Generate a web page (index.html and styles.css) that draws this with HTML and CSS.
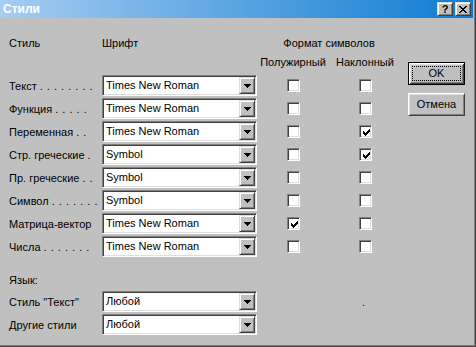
FILE: index.html
```html
<!DOCTYPE html>
<html lang="ru">
<head>
<meta charset="utf-8">
<title>Стили</title>
<link rel="stylesheet" href="styles.css">
</head>
<body>
<div class="window">
  <div class="titlebar">
    <span class="title">Стили</span>
    <div class="caption-buttons">
      <span class="cap-btn help">?</span>
      <span class="cap-btn close">
        <svg width="8" height="7" viewBox="0 0 8 7" shape-rendering="crispEdges"><path d="M0 0h2v1H0zM6 0h2v1H6zM1 1h2v1H1zM5 1h2v1H5zM2 2h4v1H2zM3 3h2v1H3zM2 4h4v1H2zM1 5h2v1H1zM5 5h2v1H5zM0 6h2v1H0zM6 6h2v1H6z" fill="#000"/></svg>
      </span>
    </div>
  </div>
  <div class="body">
    <div class="main">
      <div class="row head">
        <span class="lbl">Стиль</span>
        <span class="lbl font-h">Шрифт</span>
        <span class="group">Формат символов</span>
      </div>
      <div class="row sub">
        <span></span><span></span>
        <span class="colh">Полужирный</span>
        <span class="colh">Наклонный</span>
      </div>
      <div class="rows">
        <div class="row data">
          <span class="lbl">Текст <span class="dots">. . . . . . . .</span></span>
          <div class="combo"><span class="combo-text">Times New Roman</span><span class="combo-btn"><svg width="7" height="4" viewBox="0 0 7 4" shape-rendering="crispEdges"><path d="M0 0h7v1H0zM1 1h5v1H1zM2 2h3v1H2zM3 3h1v1H3z" fill="#000"/></svg></span></div>
          <span class="chk"></span>
          <span class="chk"></span>
        </div>
        <div class="row data">
          <span class="lbl">Функция <span class="dots">. . . . .</span></span>
          <div class="combo"><span class="combo-text">Times New Roman</span><span class="combo-btn"><svg width="7" height="4" viewBox="0 0 7 4" shape-rendering="crispEdges"><path d="M0 0h7v1H0zM1 1h5v1H1zM2 2h3v1H2zM3 3h1v1H3z" fill="#000"/></svg></span></div>
          <span class="chk"></span>
          <span class="chk"></span>
        </div>
        <div class="row data">
          <span class="lbl">Переменная <span class="dots">. .</span></span>
          <div class="combo"><span class="combo-text">Times New Roman</span><span class="combo-btn"><svg width="7" height="4" viewBox="0 0 7 4" shape-rendering="crispEdges"><path d="M0 0h7v1H0zM1 1h5v1H1zM2 2h3v1H2zM3 3h1v1H3z" fill="#000"/></svg></span></div>
          <span class="chk"></span>
          <span class="chk"><svg class="tick" width="7" height="7" viewBox="0 0 7 7" shape-rendering="crispEdges"><path d="M0 2h1v3H0zM1 3h1v3H1zM2 4h1v3H2zM3 3h1v3H3zM4 2h1v3H4zM5 1h1v3H5zM6 0h1v3H6z" fill="#000"/></svg></span>
        </div>
        <div class="row data">
          <span class="lbl">Стр. греческие <span class="dots">.</span></span>
          <div class="combo"><span class="combo-text">Symbol</span><span class="combo-btn"><svg width="7" height="4" viewBox="0 0 7 4" shape-rendering="crispEdges"><path d="M0 0h7v1H0zM1 1h5v1H1zM2 2h3v1H2zM3 3h1v1H3z" fill="#000"/></svg></span></div>
          <span class="chk"></span>
          <span class="chk"><svg class="tick" width="7" height="7" viewBox="0 0 7 7" shape-rendering="crispEdges"><path d="M0 2h1v3H0zM1 3h1v3H1zM2 4h1v3H2zM3 3h1v3H3zM4 2h1v3H4zM5 1h1v3H5zM6 0h1v3H6z" fill="#000"/></svg></span>
        </div>
        <div class="row data">
          <span class="lbl">Пр. греческие <span class="dots">. .</span></span>
          <div class="combo"><span class="combo-text">Symbol</span><span class="combo-btn"><svg width="7" height="4" viewBox="0 0 7 4" shape-rendering="crispEdges"><path d="M0 0h7v1H0zM1 1h5v1H1zM2 2h3v1H2zM3 3h1v1H3z" fill="#000"/></svg></span></div>
          <span class="chk"></span>
          <span class="chk"></span>
        </div>
        <div class="row data">
          <span class="lbl">Символ <span class="dots">. . . . . . .</span></span>
          <div class="combo"><span class="combo-text">Symbol</span><span class="combo-btn"><svg width="7" height="4" viewBox="0 0 7 4" shape-rendering="crispEdges"><path d="M0 0h7v1H0zM1 1h5v1H1zM2 2h3v1H2zM3 3h1v1H3z" fill="#000"/></svg></span></div>
          <span class="chk"></span>
          <span class="chk"></span>
        </div>
        <div class="row data">
          <span class="lbl">Матрица-вектор</span>
          <div class="combo"><span class="combo-text">Times New Roman</span><span class="combo-btn"><svg width="7" height="4" viewBox="0 0 7 4" shape-rendering="crispEdges"><path d="M0 0h7v1H0zM1 1h5v1H1zM2 2h3v1H2zM3 3h1v1H3z" fill="#000"/></svg></span></div>
          <span class="chk"><svg class="tick" width="7" height="7" viewBox="0 0 7 7" shape-rendering="crispEdges"><path d="M0 2h1v3H0zM1 3h1v3H1zM2 4h1v3H2zM3 3h1v3H3zM4 2h1v3H4zM5 1h1v3H5zM6 0h1v3H6z" fill="#000"/></svg></span>
          <span class="chk"></span>
        </div>
        <div class="row data">
          <span class="lbl">Числа <span class="dots">. . . . . . .</span></span>
          <div class="combo"><span class="combo-text">Times New Roman</span><span class="combo-btn"><svg width="7" height="4" viewBox="0 0 7 4" shape-rendering="crispEdges"><path d="M0 0h7v1H0zM1 1h5v1H1zM2 2h3v1H2zM3 3h1v1H3z" fill="#000"/></svg></span></div>
          <span class="chk"></span>
          <span class="chk"></span>
        </div>
      </div>
      <div class="lang">Язык:</div>
      <div class="rows">
        <div class="row data">
          <span class="lbl">Стиль "Текст"</span>
          <div class="combo"><span class="combo-text">Любой</span><span class="combo-btn"><svg width="7" height="4" viewBox="0 0 7 4" shape-rendering="crispEdges"><path d="M0 0h7v1H0zM1 1h5v1H1zM2 2h3v1H2zM3 3h1v1H3z" fill="#000"/></svg></span></div>
          <span></span>
          <span class="dot">.</span>
        </div>
        <div class="row data">
          <span class="lbl">Другие стили</span>
          <div class="combo"><span class="combo-text">Любой</span><span class="combo-btn"><svg width="7" height="4" viewBox="0 0 7 4" shape-rendering="crispEdges"><path d="M0 0h7v1H0zM1 1h5v1H1zM2 2h3v1H2zM3 3h1v1H3z" fill="#000"/></svg></span></div>
          <span></span>
          <span></span>
        </div>
      </div>
    </div>
    <div class="buttons">
      <div class="btn default"><span class="focus">OK</span></div>
      <div class="btn">Отмена</div>
    </div>
  </div>
</div>
</body>
</html>
```

FILE: styles.css
```css
html, body {
  margin: 0;
  padding: 0;
  background: #c0c0c0;
}

body {
  font-family: "Liberation Sans", Arial, sans-serif;
  font-size: 11px;
  color: #000;
}

.window {
  box-sizing: border-box;
  width: 476px;
  height: 347px;
  background: #c0c0c0;
  border-right: 1px solid #404040;
  border-bottom: 1px solid #404040;
  box-shadow: inset -1px -1px #808080;
  padding: 0 2px 2px 0;
  display: flex;
  flex-direction: column;
}

.titlebar {
  height: 18px;
  flex: none;
  background: linear-gradient(to right, #a6cdf2, #0e7bd0);
  display: flex;
  align-items: center;
  justify-content: space-between;
  padding: 0 2px 0 3px;
}

.title {
  color: #fff;
  font-weight: bold;
  font-size: 12px;
  line-height: 14px;
}

.caption-buttons {
  display: flex;
  gap: 2px;
}

.cap-btn {
  box-sizing: border-box;
  width: 16px;
  height: 14px;
  background: #c0c0c0;
  border: 1px solid;
  border-color: #dfdfdf #404040 #404040 #dfdfdf;
  box-shadow: inset 1px 1px #fff, inset -1px -1px #808080;
  display: flex;
  align-items: center;
  justify-content: center;
}

.cap-btn.help {
  font-weight: bold;
  font-size: 11px;
  line-height: 12px;
}

.body {
  flex: 1;
  display: flex;
}

.main {
  padding: 18px 0 0 9px;
  display: flex;
  flex-direction: column;
}

.row {
  display: grid;
  grid-template-columns: 93px 155px 72px 72px;
  align-items: center;
}

.row.head {
  height: 14px;
  line-height: 14px;
}

.group {
  grid-column: 3 / span 2;
  text-align: center;
}

.row.sub {
  height: 14px;
  line-height: 14px;
  margin-top: 5px;
}

.colh {
  text-align: center;
  white-space: nowrap;
}

.rows {
  display: flex;
  flex-direction: column;
  gap: 2px;
  margin-top: 6px;
}

.row.data {
  height: 21px;
}

.lbl {
  white-space: nowrap;
}

.dots {
  letter-spacing: 0.5px;
}

.combo {
  box-sizing: border-box;
  height: 21px;
  border: 1px solid;
  border-color: #808080 #fff #fff #808080;
  padding: 1px;
  box-shadow: inset 1px 1px #404040, inset -1px -1px #dfdfdf;
  background: #fff;
  display: flex;
}

.combo-text {
  flex: 1;
  line-height: 17px;
  padding-left: 2px;
  white-space: nowrap;
  overflow: hidden;
}

.combo-btn {
  box-sizing: border-box;
  width: 16px;
  height: 17px;
  background: #c0c0c0;
  border: 1px solid;
  border-color: #dfdfdf #404040 #404040 #dfdfdf;
  box-shadow: inset 1px 1px #fff, inset -1px -1px #808080;
  display: flex;
  align-items: center;
  justify-content: center;
}

.combo-btn svg {
  display: block;
}

.chk {
  box-sizing: border-box;
  width: 13px;
  height: 13px;
  margin-left: 30px;
  background: #fff;
  border: 1px solid;
  border-color: #808080 #fff #fff #808080;
  box-shadow: inset 1px 1px #404040, inset -1px -1px #dfdfdf;
  padding: 2px;
}

.tick {
  display: block;
  margin: 1px;
}

.dot {
  margin-left: 33px;
}

.lang {
  margin-top: 16px;
  line-height: 14px;
  height: 14px;
}

.lang + .rows {
  margin-top: 4px;
}

.buttons {
  padding: 44px 0 0 7px;
  display: flex;
  flex-direction: column;
  gap: 8px;
}

.btn {
  box-sizing: border-box;
  width: 57px;
  height: 23px;
  background: #c0c0c0;
  border: 1px solid;
  border-color: #fff #404040 #404040 #fff;
  box-shadow: inset 1px 1px #dfdfdf, inset -1px -1px #808080;
  display: flex;
  align-items: center;
  justify-content: center;
  line-height: 13px;
}

.btn.default {
  border: 1px solid #000;
  box-shadow: inset 1px 1px #fff, inset -1px -1px #404040, inset 2px 2px #dfdfdf, inset -2px -2px #808080;
  padding: 3px;
}

.focus {
  box-sizing: border-box;
  width: 100%;
  height: 100%;
  border: 1px dotted #000;
  display: flex;
  align-items: center;
  justify-content: center;
}
```
